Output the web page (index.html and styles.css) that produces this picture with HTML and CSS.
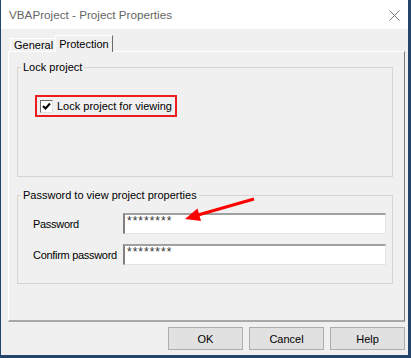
FILE: index.html
```html
<!DOCTYPE html>
<html lang="en">
<head>
    <meta charset="UTF-8">
    <meta name="viewport" content="width=device-width, initial-scale=1.0">
    <title>VBAProject - Project Properties</title>
    <link rel="stylesheet" href="styles.css">
</head>
<body>
    <div class="window">
        <div class="titlebar">
            <span class="title">VBAProject - Project Properties</span>
            <svg class="close" width="11" height="11" viewBox="0 0 11 11">
                <path d="M0.5 0.5 L10.5 10.5 M10.5 0.5 L0.5 10.5" stroke="#7a7a7a" stroke-width="1" fill="none"/>
            </svg>
        </div>

        <div class="content">
            <div class="tabs">
                <div class="tab">General</div>
                <div class="tab active">Protection</div>
            </div>

            <div class="panel">
                <fieldset class="group lock">
                    <legend>Lock project</legend>
                    <label class="highlight">
                        <span class="checkbox">
                            <svg width="9" height="9" viewBox="0 0 9 9">
                                <path d="M1 4 L3.5 6.5 L8 1.5" stroke="#000" stroke-width="2" fill="none"/>
                            </svg>
                        </span>
                        Lock project for viewing
                    </label>
                </fieldset>

                <fieldset class="group password">
                    <legend>Password to view project properties</legend>
                    <div class="field">
                        <span class="label">Password</span>
                        <div class="input">********</div>
                    </div>
                    <div class="field">
                        <span class="label">Confirm password</span>
                        <div class="input">********</div>
                    </div>
                </fieldset>
            </div>

            <div class="buttons">
                <button>OK</button>
                <button>Cancel</button>
                <button>Help</button>
            </div>
        </div>
    </div>

    <!-- annotation arrow pointing at the password box -->
    <svg class="arrow" width="411" height="358" viewBox="0 0 411 358">
        <line x1="254" y1="199" x2="198" y2="215" stroke="#f00" stroke-width="3"/>
        <polygon points="185,219 201,221 197.5,208.5" fill="#f00"/>
    </svg>
</body>
</html>
```

FILE: styles.css
```css
body {
    margin: 0;
    height: 358px;
    overflow: hidden;
    background: #24466b;
    font-family: "Liberation Sans", Arial, sans-serif;
    font-size: 11px;
    color: #000;
}

.window {
    width: 407px;
    height: 355px;
    margin-left: 1px;
    background: #f0f0f0;
    display: flex;
    flex-direction: column;
}

.titlebar {
    height: 29px;
    background: #fff;
    display: flex;
    align-items: center;
    justify-content: space-between;
    padding: 0 8px 0 8px;
}

.title {
    font-size: 11.7px;
    color: #666;
}

.close {
    margin-top: 1px;
}

.content {
    padding: 6px 3px 0 7px;
    display: flex;
    flex-direction: column;
}

.tabs {
    display: flex;
    align-items: flex-end;
    padding-left: 2px;
    height: 17px;
    margin-bottom: -1px;
    position: relative;
    z-index: 1;
}

.tab {
    height: 14px;
    line-height: 13px;
    padding: 0 2px 0 3px;
    border-top: 1px solid #fff;
    border-left: 1px solid #fff;
    box-sizing: border-box;
}

.tab.active {
    height: 17px;
    line-height: 16px;
    padding: 0 3px 0 3px;
    background: #f0f0f0;
    border-right: 1px solid #696969;
}

.panel {
    height: 271px;
    box-sizing: border-box;
    border-top: 1px solid #fff;
    border-left: 1px solid #fff;
    border-right: 1px solid #7a7a7a;
    border-bottom: 2px solid #a9a9a9;
    padding: 9px 11px 0 8px;
}

.group {
    margin: 0;
    padding: 0;
    min-width: 0;
    border: 1px solid #d5d5d5;
    box-sizing: border-box;
}

.group legend {
    margin-left: 3px;
    padding: 0 2px;
    line-height: 13px;
}

.lock {
    height: 116px;
}

.password {
    height: 95px;
    margin-top: 12px;
}

.highlight {
    display: inline-flex;
    align-items: center;
    height: 22px;
    box-sizing: border-box;
    margin: 21px 0 0 17px;
    padding: 0 3px 0 3px;
    border: 2px solid #ee1c1c;
}

.checkbox {
    width: 13px;
    height: 13px;
    box-sizing: border-box;
    margin-right: 4px;
    background: #fff;
    border-top: 1px solid #696969;
    border-left: 1px solid #696969;
    border-right: 1px solid #e3e3e3;
    border-bottom: 1px solid #e3e3e3;
    display: flex;
    align-items: center;
    justify-content: center;
}

.field {
    display: flex;
    align-items: center;
    margin-top: 11px;
    padding: 0 6px 0 15px;
}

.field + .field {
    margin-top: 10px;
}

.label {
    width: 90px;
    letter-spacing: -0.3px;
}

.input {
    flex: 1;
    height: 21px;
    box-sizing: border-box;
    background: #fff;
    border-top: 2px solid #a0a0a0;
    border-left: 2px solid #808080;
    border-right: 1px solid #e3e3e3;
    border-bottom: 1px solid #e3e3e3;
    padding: 0 2px;
    font-size: 12px;
    line-height: 13px;
    letter-spacing: 1px;
    color: #333;
}

.buttons {
    display: flex;
    justify-content: flex-end;
    gap: 6px;
    margin-top: 5px;
}

.buttons button {
    width: 75px;
    height: 23px;
    margin: 0;
    background: #e1e1e1;
    border: 1px solid #adadad;
    font-family: "Liberation Sans", Arial, sans-serif;
    font-size: 11px;
    color: #000;
}

.arrow {
    position: absolute;
    top: 0;
    left: 0;
    pointer-events: none;
}
```
